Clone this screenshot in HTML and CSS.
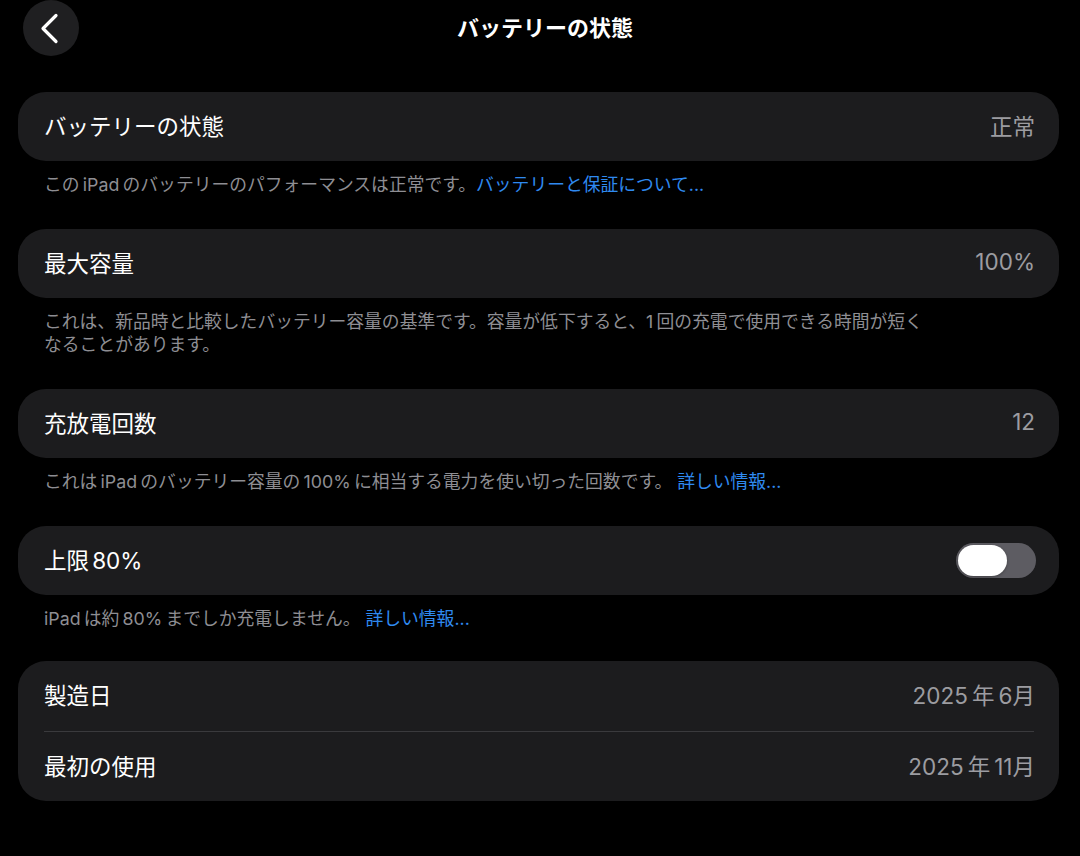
FILE: index.html
```html
<!DOCTYPE html>
<html lang="ja">
<head>
<meta charset="utf-8">
<title>バッテリーの状態</title>
<link rel="stylesheet" href="styles.css">
</head>
<body>
<div class="page">
  <header class="header">
    <button class="back" aria-label="戻る">
      <svg width="56" height="56" viewBox="0 0 56 56"><path d="M33 15.5 L20 28.5 L33 41.5" fill="none" stroke="#fff" stroke-width="3.2" stroke-linecap="round" stroke-linejoin="round"/></svg>
    </button>
    <h1 class="title">バッテリーの状態</h1>
    <span></span>
  </header>

  <section class="card">
    <div class="row"><span class="label">バッテリーの状態</span><span class="value">正常</span></div>
  </section>
  <p class="footer">この<span class="lat">iPad</span>のバッテリーのパフォーマンスは正常です。<span class="link">バッテリーと保証について...</span></p>

  <section class="card">
    <div class="row"><span class="label">最大容量</span><span class="value">100%</span></div>
  </section>
  <p class="footer">これは、新品時と比較したバッテリー容量の基準です。容量が低下すると、<span class="latr">1</span>回の充電で使用できる時間が短く<br>なることがあります。</p>

  <section class="card">
    <div class="row"><span class="label">充放電回数</span><span class="value">12</span></div>
  </section>
  <p class="footer">これは<span class="lat">iPad</span>のバッテリー容量の<span class="lat">100%</span>に相当する電力を使い切った回数です。 <span class="link">詳しい情報...</span></p>

  <section class="card">
    <div class="row"><span class="label">上限<span class="latl">80%</span></span><span class="toggle"><span class="knob"></span></span></div>
  </section>
  <p class="footer"><span class="latr">iPad</span>は約<span class="lat">80%</span>までしか充電しません。 <span class="link">詳しい情報...</span></p>

  <section class="card">
    <div class="row first"><span class="label">製造日</span><span class="value">2025<span class="lat">年</span>6月</span></div>
    <div class="divider"></div>
    <div class="row last"><span class="label">最初の使用</span><span class="value">2025<span class="lat">年</span>11月</span></div>
  </section>
</div>
</body>
</html>
```

FILE: styles.css
```css
* { box-sizing: border-box; }
html, body {
  margin: 0;
  padding: 0;
  background: #000;
}
body {
  font-family: Inter, "Noto Sans CJK JP", sans-serif;
  color: #fff;
  width: 1080px;
  height: 856px;
  overflow: hidden;
}
.page {
  padding: 0 21px 0 18px;
}
.header {
  display: grid;
  grid-template-columns: 56px 1fr 56px;
  align-items: center;
  height: 56px;
  margin: 0 -8px 36px 5px;
}
.back {
  width: 56px;
  height: 56px;
  border-radius: 50%;
  border: none;
  padding: 0;
  background: #1f1f21;
  display: flex;
  align-items: center;
  justify-content: center;
}
.back svg { display: block; }
.title {
  margin: 0;
  text-align: center;
  font-size: 22px;
  font-weight: 700;
  line-height: 56px;
}
.card {
  background: #1c1c1e;
  border-radius: 28px;
}
.row {
  display: flex;
  align-items: center;
  justify-content: space-between;
  height: 69px;
  padding: 0 24px 4px 26px;
}
.row.first { height: 70px; }
.row.last { height: 69px; }
.label {
  font-size: 22.5px;
  color: #fff;
}
.value {
  font-size: 22.5px;
  color: #9c9ca1;
}
.lat { margin: 0 0.18em; }
.latr { margin-right: 0.18em; }
.latl { margin-left: 0.14em; }
.divider {
  height: 1px;
  background: #3a3a3d;
  margin: 0 25px 0 26px;
}
.footer {
  margin: 0;
  padding: 12px 26px 33px;
  font-size: 17.8px;
  line-height: 23px;
  color: #8e8e93;
}
.footer:nth-of-type(4) { padding-bottom: 31px; }
.link { color: #2f8af0; }
.toggle {
  width: 80px;
  height: 35px;
  border-radius: 18px;
  background: #5d5c62;
  padding: 2px 0 0 2px;
  margin: 2px -1px -2px 0;
  display: block;
}
.knob {
  display: block;
  width: 49px;
  height: 31px;
  border-radius: 16px;
  background: #fff;
  box-shadow: 0 1px 3px rgba(0,0,0,0.3);
}
```
